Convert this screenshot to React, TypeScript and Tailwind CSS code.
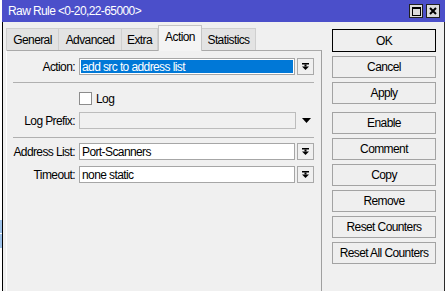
import React from 'react'

const TABS = [
  { label: 'General', w: 'w-[53px]' },
  { label: 'Advanced', w: 'w-[64px]' },
  { label: 'Extra', w: 'w-[37px]' },
  { label: 'Action', w: 'w-[44px]', active: true },
  { label: 'Statistics', w: 'w-[55px]' },
]

const BUTTONS = ['Cancel', 'Apply']
const BUTTONS2 = ['Comment', 'Copy', 'Remove', 'Reset Counters', 'Reset All Counters']

function DropIcon() {
  return (
    <svg width="9" height="9" viewBox="0 0 9 9">
      <rect x="1" y="1" width="7" height="1.5" fill="#000" />
      <rect x="3.5" y="2.5" width="2" height="2" fill="#000" />
      <polygon points="1,4.5 8,4.5 4.5,8" fill="#000" />
    </svg>
  )
}

function DropButton() {
  return (
    <div className="ml-[2px] w-[17px] h-[17px] border border-[#a9a9a9] bg-[#f0f0f0] flex items-center justify-center">
      <DropIcon />
    </div>
  )
}

function Label({ children }: { children: React.ReactNode }) {
  return <div className="w-[68px] text-right whitespace-nowrap">{children}</div>
}

function Btn({ label, def }: { label: string; def?: boolean }) {
  return (
    <div
      className={`flex items-center justify-center bg-[#efefef] border ${
        def ? 'h-[23px] border-black' : 'h-[22px] border-[#a3a3a3]'
      }`}
    >
      {label}
    </div>
  )
}

export default function App() {
  return (
    <div className="w-[448px] h-[291px] flex bg-white overflow-hidden font-['Liberation_Sans',Arial,sans-serif] text-[12px] tracking-[-0.6px] text-black">
      {/* background window peeking on the left */}
      <div className="w-[2px] flex flex-col">
        <div className="h-[220px]" />
        <div className="h-[13px] bg-[#9fc3ea]" />
        <div className="h-[1px] bg-white" />
        <div className="h-[14px] bg-[#9fc3ea]" />
      </div>

      {/* window */}
      <div className="w-[443px] flex flex-col">
        {/* title bar */}
        <div className="h-[22px] shrink-0 bg-[#4b4fca] flex items-center pl-[6px] pr-[5px]">
          <span className="text-white">Raw Rule &lt;0-20,22-65000&gt;</span>
          <div className="ml-auto flex gap-[3px]">
            <div className="w-[14px] h-[14px] border border-[#202020] bg-[#dcdcdc] flex items-center justify-center">
              <svg width="9" height="9" viewBox="0 0 9 9">
                <rect x="0.5" y="0.5" width="8" height="8" fill="none" stroke="#000" strokeWidth="1" />
                <rect x="0.5" y="0.5" width="8" height="1.5" fill="#000" />
              </svg>
            </div>
            <div className="w-[14px] h-[14px] border border-[#202020] bg-[#dcdcdc] flex items-center justify-center">
              <svg width="8" height="8" viewBox="0 0 8 8">
                <path d="M1 1 L7 7 M7 1 L1 7" stroke="#000" strokeWidth="2" />
              </svg>
            </div>
          </div>
        </div>

        {/* body */}
        <div className="flex-1 flex bg-[#f0f0f0] border-l border-l-black border-r border-r-[#2a2a2a] pl-[3px]">
          {/* tabs + panel */}
          <div className="w-[316px] flex flex-col pt-[3px]">
            <div className="h-[25px] flex items-end">
              {TABS.map((t) =>
                t.active ? (
                  <div
                    key={t.label}
                    className={`${t.w} h-[26px] -mb-[1px] relative z-10 bg-[#f4f4f4] border-t border-l border-r border-[#c4c4c4] flex items-center justify-center pb-[3px]`}
                  >
                    {t.label}
                  </div>
                ) : (
                  <div
                    key={t.label}
                    className={`${t.w} h-[22px] bg-[#e3e3e3] border-t border-l border-r border-[#cfcfcf] -ml-[1px] first:ml-0 flex items-center justify-center`}
                  >
                    {t.label}
                  </div>
                ),
              )}
            </div>

            <div className="flex-1 border-t border-t-[#a9a9a9] border-l border-l-white border-r border-r-[#a0a0a0] bg-[#f0f0f0] pt-[7px]">
              {/* Action */}
              <div className="flex items-center h-[17px]">
                <Label>Action:</Label>
                <div className="ml-[4px] w-[216px] h-[17px] border border-[#a6a6a6] bg-white p-[1px]">
                  <div className="h-full bg-[#0078d7] text-white pl-[1px] flex items-center">add src to address list</div>
                </div>
                <DropButton />
              </div>

              <div className="ml-[6px] mt-[7px] w-[301px] h-[1px] bg-[#b0b0b0]" />

              {/* Log */}
              <div className="mt-[9px] ml-[72px] flex items-center h-[13px]">
                <div className="w-[13px] h-[13px] border border-[#8c8c8c] bg-white" />
                <span className="ml-[4px]">Log</span>
              </div>

              {/* Log Prefix */}
              <div className="mt-[7px] flex items-center h-[17px]">
                <Label>Log Prefix:</Label>
                <div className="ml-[4px] w-[217px] h-[17px] border border-[#bcbcbc] bg-[#f0f0f0]" />
                <div className="ml-[6px] w-[9px] flex justify-center">
                  <svg width="9" height="5" viewBox="0 0 9 5">
                    <polygon points="0,0 9,0 4.5,5" fill="#000" />
                  </svg>
                </div>
              </div>

              <div className="ml-[6px] mt-[8px] w-[301px] h-[1px] bg-[#b0b0b0]" />

              {/* Address List */}
              <div className="mt-[5px] flex items-center h-[17px]">
                <Label>Address List:</Label>
                <div className="ml-[4px] w-[216px] h-[17px] border border-[#a6a6a6] bg-white pl-[2px] flex items-center">
                  Port-Scanners
                </div>
                <DropButton />
              </div>

              {/* Timeout */}
              <div className="mt-[6px] flex items-center h-[17px]">
                <Label>Timeout:</Label>
                <div className="ml-[4px] w-[216px] h-[17px] border border-[#a6a6a6] bg-white pl-[2px] flex items-center">
                  none static
                </div>
                <DropButton />
              </div>
            </div>
          </div>

          {/* buttons */}
          <div className="ml-[10px] w-[104px] pt-[7px] flex flex-col gap-[4px]">
            <Btn label="OK" def />
            {BUTTONS.map((b) => (
              <Btn key={b} label={b} />
            ))}
            <div className="mt-[4px]">
              <Btn label="Enable" />
            </div>
            {BUTTONS2.map((b) => (
              <Btn key={b} label={b} />
            ))}
          </div>
        </div>
      </div>

      <div className="w-[3px]" />
    </div>
  )
}
